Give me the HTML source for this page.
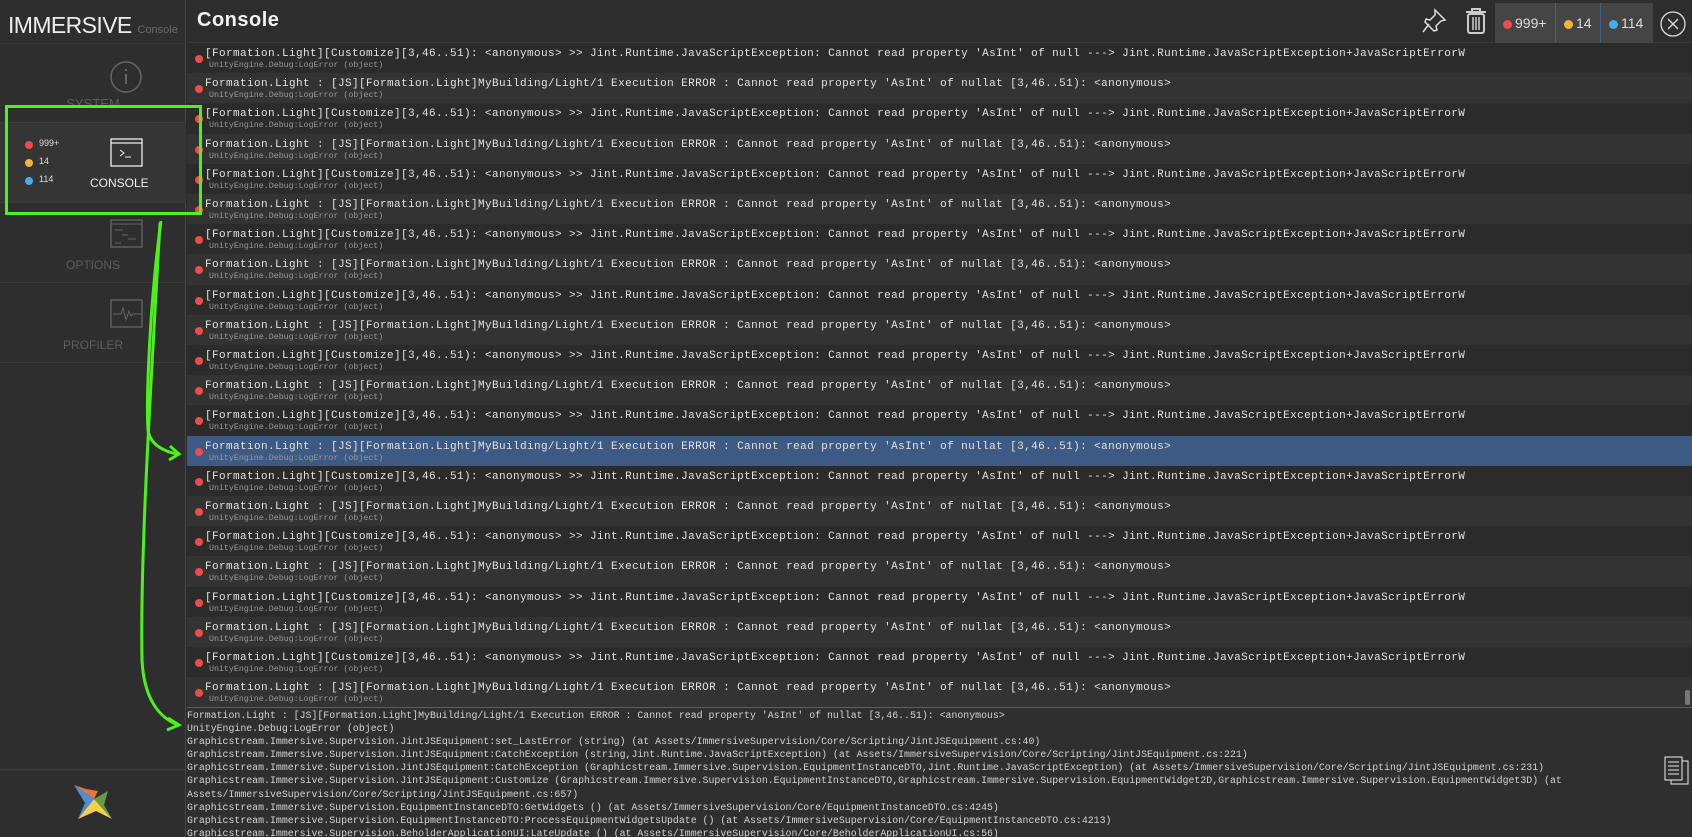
<!DOCTYPE html><html><head><meta charset="utf-8"><style>
*{margin:0;padding:0;box-sizing:border-box}
body{width:1692px;height:837px;background:#2b2b2b;overflow:hidden;position:relative;font-family:"Liberation Sans",sans-serif}
#side{position:absolute;left:0;top:0;width:186px;height:837px;background:#2e2e2e;border-right:1px solid #3a4a5e}
.sec{position:absolute;left:0;width:186px;height:80px;border-top:1px solid #3c3c3c;color:#5e5e5e;font-size:12px;text-align:center}
#hdr{position:absolute;left:187px;top:0;right:0;height:43px;background:#2d2d2d;border-bottom:1px solid #3a3a3a}
.row{position:absolute;left:187px;right:0;height:30.2px;font-family:"Liberation Mono",monospace;white-space:nowrap;overflow:hidden}
.row .d{position:absolute;left:8px;top:12px;width:8px;height:8px;border-radius:50%;background:#ef4b4b}
.row .m{position:absolute;left:18px;top:5px;font-size:11px;letter-spacing:0.4px;color:#e2e2e2}
.row .s{position:absolute;left:22px;top:18px;font-size:8.3px;color:#9a9a9a}
#det{position:absolute;left:187px;top:707px;right:0;bottom:0;background:#2f2f2f;border-top:1px solid #4a6385;font-family:"Liberation Mono",monospace;font-size:9.9px;color:#d4d4d4;line-height:13.1px;padding:1px 0 0 0;white-space:pre;overflow:hidden}
</style></head><body>
<div id="side">
 <div style="position:absolute;left:8px;top:12px;color:#eee;font-size:23px;letter-spacing:-0.6px;white-space:nowrap">IMMERSIVE <span style="font-size:11px;color:#6c6c6c;letter-spacing:0">Console</span></div>
 <div class="sec" style="top:43px">
  <svg width="40" height="40" style="position:absolute;left:106px;top:13px"><circle cx="20" cy="20" r="15" fill="none" stroke="#666" stroke-width="1.5"/><rect x="19" y="17" width="2" height="10" fill="#666"/><rect x="19" y="12" width="2" height="2" fill="#666"/></svg>
  <div style="position:absolute;left:0;right:0;top:52px;font-size:13px">SYSTEM</div></div>
 <div class="sec" style="top:122px;background:#353535">
  <div style="position:absolute;left:25px;top:18px;width:8px;height:8px;border-radius:50%;background:#ef4b4b"></div><div style="position:absolute;left:39px;top:15px;color:#ddd;font-size:9px">999+</div>
  <div style="position:absolute;left:25px;top:36px;width:8px;height:8px;border-radius:50%;background:#f2b43d"></div><div style="position:absolute;left:39px;top:33px;color:#ddd;font-size:9px">14</div>
  <div style="position:absolute;left:25px;top:54px;width:8px;height:8px;border-radius:50%;background:#4aa9f0"></div><div style="position:absolute;left:39px;top:51px;color:#ddd;font-size:9px">114</div>
  <svg width="34" height="30" style="position:absolute;left:110px;top:15px"><rect x="1" y="1" width="31" height="27" fill="none" stroke="#eee" stroke-width="1.3"/><line x1="1" y1="5" x2="32" y2="5" stroke="#eee" stroke-width="1.3"/><path d="M10 12l4 3-4 3M15 19h6" stroke="#eee" fill="none"/></svg>
  <div style="position:absolute;left:90px;top:53px;color:#eee;font-size:12px">CONSOLE</div></div>
 <div class="sec" style="top:202px">
  <svg width="34" height="30" style="position:absolute;left:110px;top:16px"><rect x="1" y="1" width="31" height="27" fill="none" stroke="#666" stroke-width="1.3"/><line x1="1" y1="5" x2="32" y2="5" stroke="#666"/><path d="M5 11h8M12 16h6M18 20h8M5 24h6" stroke="#666"/></svg>
  <div style="position:absolute;left:0;right:0;top:55px;font-size:12px">OPTIONS</div></div>
 <div class="sec" style="top:282px">
  <svg width="34" height="30" style="position:absolute;left:110px;top:16px"><rect x="1" y="1" width="31" height="27" fill="none" stroke="#666" stroke-width="1.3"/><path d="M3 15h8l2-6 3 12 3-9 2 5 2-2h9" stroke="#666" fill="none"/></svg>
  <div style="position:absolute;left:0;right:0;top:55px;font-size:12px">PROFILER</div></div>
 <div style="position:absolute;left:0;top:362px;width:186px;border-top:1px solid #3c3c3c"></div>
 <div style="position:absolute;left:0;top:769px;width:186px;border-top:1px solid #444"></div>
 <svg width="44" height="40" style="position:absolute;left:72px;top:783px"><path d="M2 2L22 16 26 8 14 6Z" fill="#e8743a"/><path d="M2 2L22 16 6 36 13 20Z" fill="#4a8fd6"/><path d="M22 16L40 36 24 28 6 36Z" fill="#f3cf4a"/><path d="M22 16L36 8 32 22 40 36Z" fill="#6c9a44"/></svg>
</div>
<div id="hdr">
 <div style="position:absolute;left:10px;top:9px;color:#f2f2f2;font-size:20px;font-weight:bold;letter-spacing:0.5px">Console</div>
 <svg width="28" height="30" style="position:absolute;left:1234px;top:6px"><path d="M14 4l10 10-4 1-5 5 1 4-3 1-9-9 1-3 4 1 5-5z M8 18L2 26" fill="none" stroke="#ddd" stroke-width="1.5"/></svg>
 <svg width="24" height="28" style="position:absolute;left:1277px;top:7px"><path d="M2 5h20M8 5V2h8v3" stroke="#ccc" stroke-width="2" fill="none"/><rect x="4" y="7" width="16" height="19" rx="2" fill="none" stroke="#ccc" stroke-width="2"/><path d="M9 10v13M12 10v13M15 10v13" stroke="#ccc" stroke-width="1.5"/></svg>
 <div style="position:absolute;left:1308px;top:3px;width:158px;height:40px;background:#454545;font-size:14px;color:#ddd">
  <span style="position:absolute;left:8px;top:17px;width:9px;height:9px;border-radius:50%;background:#ef4b4b"></span><span style="position:absolute;left:20px;top:12px">999+</span>
  <span style="position:absolute;left:60px;top:0;height:40px;border-left:1px solid #3e5f8a"></span>
  <span style="position:absolute;left:69px;top:17px;width:9px;height:9px;border-radius:50%;background:#f2b43d"></span><span style="position:absolute;left:81px;top:12px">14</span>
  <span style="position:absolute;left:105px;top:0;height:40px;border-left:1px solid #3e5f8a"></span>
  <span style="position:absolute;left:114px;top:17px;width:9px;height:9px;border-radius:50%;background:#4aa9f0"></span><span style="position:absolute;left:126px;top:12px">114</span>
 </div>
 <svg width="28" height="28" style="position:absolute;left:1472px;top:10px"><circle cx="14" cy="14" r="12" fill="none" stroke="#ddd" stroke-width="1.3"/><path d="M9 9l10 10M19 9L9 19" stroke="#ddd" stroke-width="1.3"/></svg>
</div>
<div id="rows"></div>
<div id="det">Formation.Light : [JS][Formation.Light]MyBuilding/Light/1 Execution ERROR : Cannot read property 'AsInt' of nullat [3,46..51): &lt;anonymous&gt;
UnityEngine.Debug:LogError (object)
Graphicstream.Immersive.Supervision.JintJSEquipment:set_LastError (string) (at Assets/ImmersiveSupervision/Core/Scripting/JintJSEquipment.cs:40)
Graphicstream.Immersive.Supervision.JintJSEquipment:CatchException (string,Jint.Runtime.JavaScriptException) (at Assets/ImmersiveSupervision/Core/Scripting/JintJSEquipment.cs:221)
Graphicstream.Immersive.Supervision.JintJSEquipment:CatchException (Graphicstream.Immersive.Supervision.EquipmentInstanceDTO,Jint.Runtime.JavaScriptException) (at Assets/ImmersiveSupervision/Core/Scripting/JintJSEquipment.cs:231)
Graphicstream.Immersive.Supervision.JintJSEquipment:Customize (Graphicstream.Immersive.Supervision.EquipmentInstanceDTO,Graphicstream.Immersive.Supervision.EquipmentWidget2D,Graphicstream.Immersive.Supervision.EquipmentWidget3D) (at
Assets/ImmersiveSupervision/Core/Scripting/JintJSEquipment.cs:657)
Graphicstream.Immersive.Supervision.EquipmentInstanceDTO:GetWidgets () (at Assets/ImmersiveSupervision/Core/EquipmentInstanceDTO.cs:4245)
Graphicstream.Immersive.Supervision.EquipmentInstanceDTO:ProcessEquipmentWidgetsUpdate () (at Assets/ImmersiveSupervision/Core/EquipmentInstanceDTO.cs:4213)
Graphicstream.Immersive.Supervision.BeholderApplicationUI:LateUpdate () (at Assets/ImmersiveSupervision/Core/BeholderApplicationUI.cs:56)</div>
<div style="position:absolute;left:1685px;top:690px;width:5px;height:15px;border-radius:2px;background:#777"></div>
<svg width="26" height="30" style="position:absolute;left:1664px;top:756px"><rect x="7" y="5" width="17" height="23" fill="#2f2f2f" stroke="#eee"/><rect x="1" y="1" width="17" height="23" fill="#2f2f2f" stroke="#eee"/><path d="M4 6h11M4 10h11M4 14h11M4 18h11" stroke="#eee"/></svg>
<svg width="220" height="837" style="position:absolute;left:0;top:0" fill="none" stroke="#4cf21a" stroke-width="3">
 <rect x="6.5" y="106.5" width="194" height="107"/>
 <path d="M161 221 C150 300 146 400 148 430 C150 445 165 452 178 454"/>
 <path d="M170 446 L179 454 L169 460"/>
 <path d="M160 223 C150 400 140 560 142 660 C144 700 160 718 178 725"/>
 <path d="M168 718 L179 725 L167 730"/>
</svg>
<script>
var a="[Formation.Light][Customize][3,46..51): &lt;anonymous&gt; &gt;&gt; Jint.Runtime.JavaScriptException: Cannot read property 'AsInt' of null ---&gt; Jint.Runtime.JavaScriptException+JavaScriptErrorW";
var b="Formation.Light : [JS][Formation.Light]MyBuilding/Light/1 Execution ERROR : Cannot read property 'AsInt' of nullat [3,46..51): &lt;anonymous&gt;";
var h="";
for(var i=0;i<22;i++){var bg=i==13?"#3d5a85":(i%2?"#333333":"#2b2b2b");
h+='<div class="row" style="top:'+(43+i*30.2)+'px;background:'+bg+'"><div class="d"></div><div class="m">'+(i%2?b:a)+'</div><div class="s">UnityEngine.Debug:LogError (object)</div></div>';}
document.getElementById("rows").innerHTML=h;
</script>
</body></html>
